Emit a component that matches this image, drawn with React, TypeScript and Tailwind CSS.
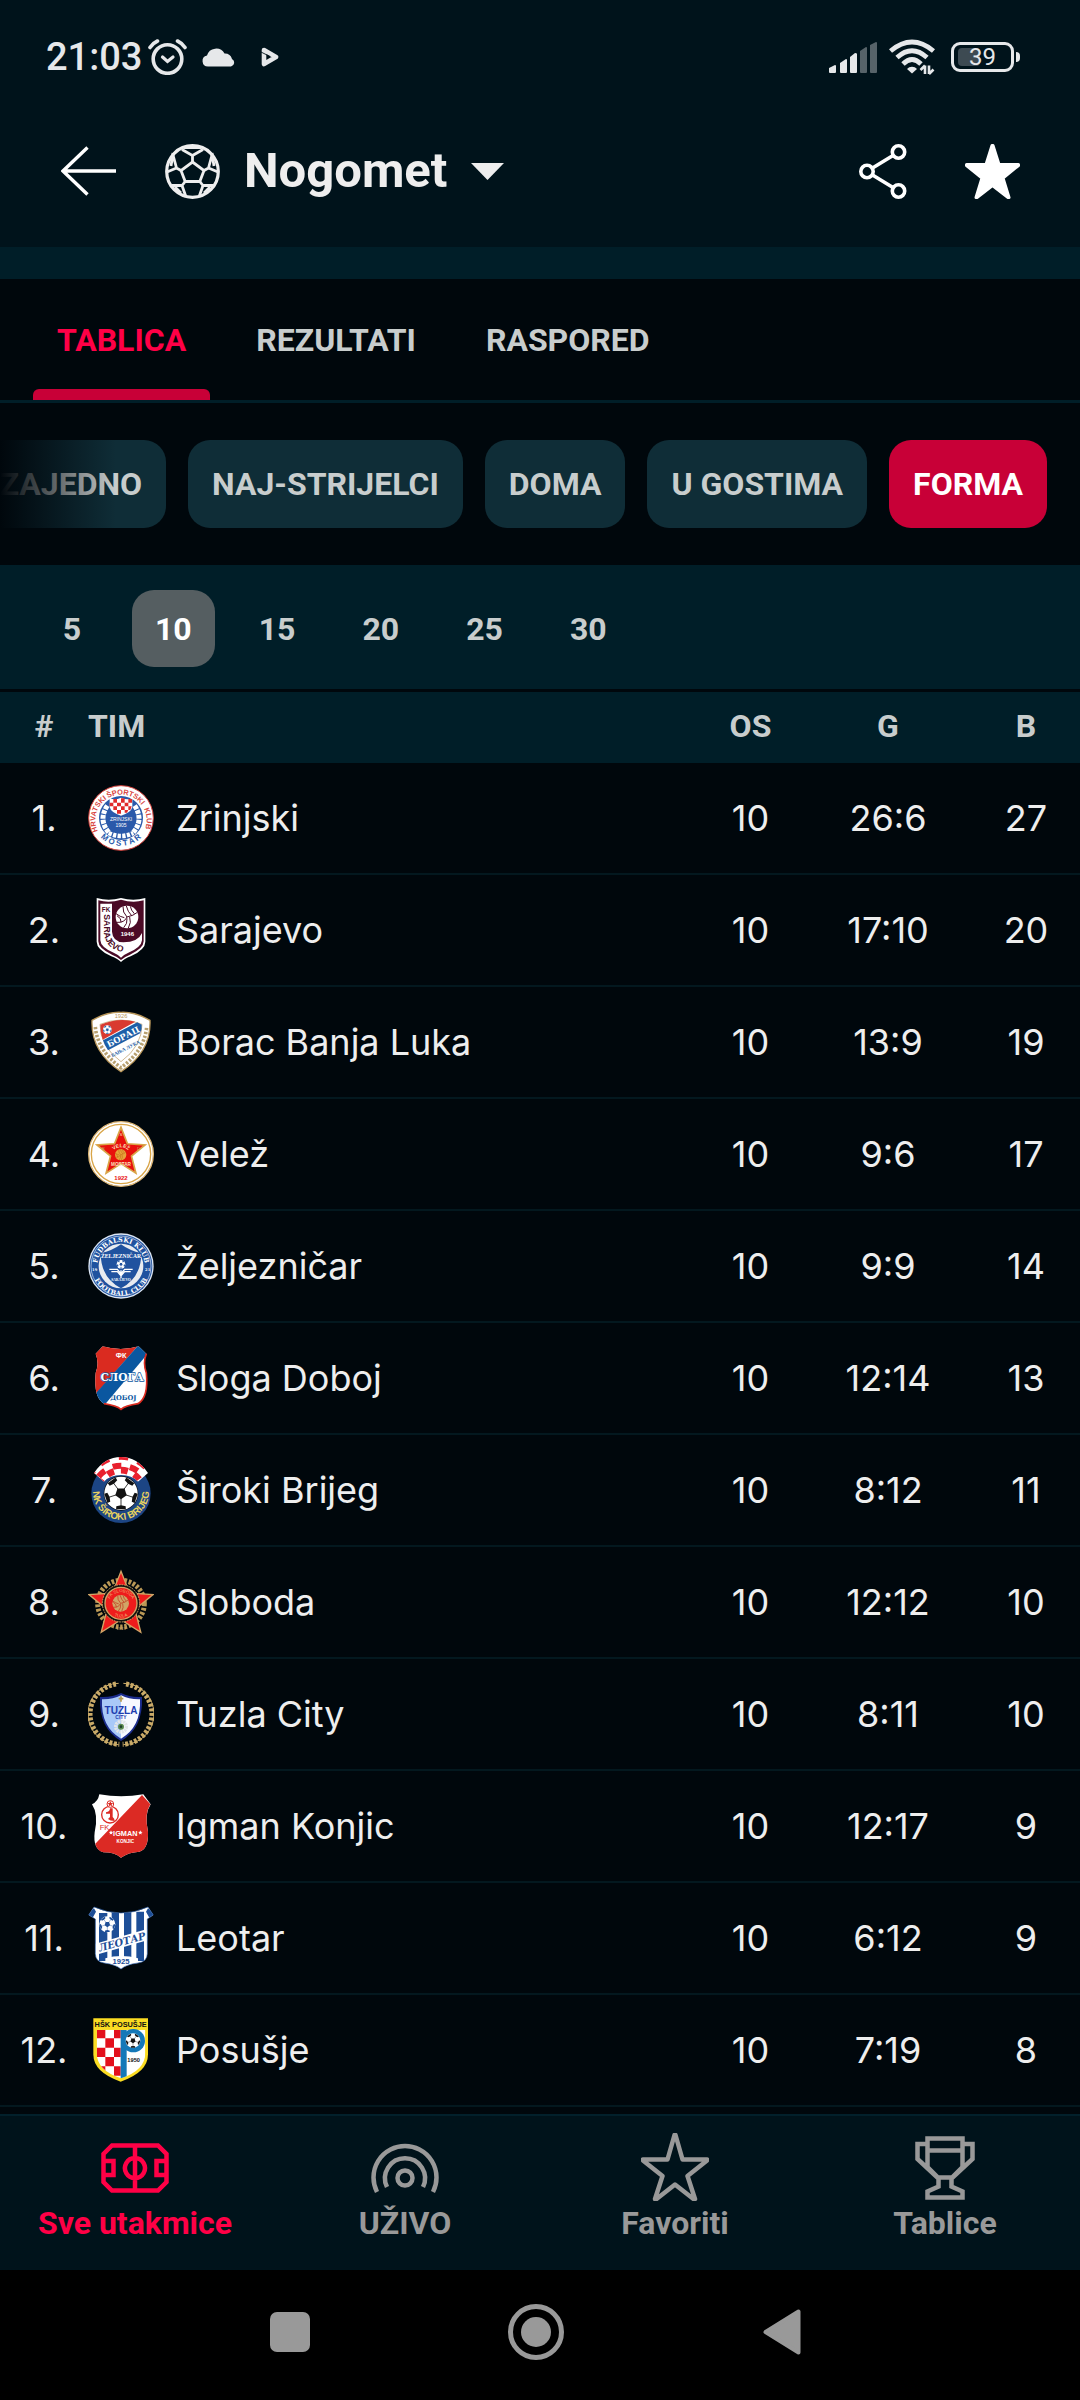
import { useState } from "react";
import type { ReactNode } from "react";

interface Team {
  name: string;
  played: number;
  goals: string;
  points: number;
  logo: ReactNode;
}

interface BallProps {
  cx: number;
  cy: number;
  r: number;
  base?: string;
  patch?: string;
}

const polar = (cx: number, cy: number, r: number, deg: number) => {
  const a = ((deg - 90) * Math.PI) / 180;
  return `${(cx + r * Math.cos(a)).toFixed(1)},${(cy + r * Math.sin(a)).toFixed(1)}`;
};

const starPoints = (cx: number, cy: number, outer: number, inner: number) =>
  Array.from({ length: 10 }, (_, i) => polar(cx, cy, i % 2 ? inner : outer, i * 36)).join(" ");

// Football with a centre pentagon and five patches cut by the edge
function Ball({ cx, cy, r, base = "#fff", patch = "#111" }: BallProps) {
  const sides = [0, 72, 144, 216, 288];
  return (
    <g>
      <circle cx={cx} cy={cy} r={r} fill={base} />
      <polygon points={sides.map((d) => polar(cx, cy, r * 0.36, d + 36)).join(" ")} fill={patch} />
      {sides.map((d) => (
        <g key={d}>
          <polygon
            points={[
              polar(cx, cy, r * 0.72, d + 36),
              polar(cx, cy, r * 0.82, d + 56),
              polar(cx, cy, r, d + 53),
              polar(cx, cy, r, d + 19),
              polar(cx, cy, r * 0.82, d + 16),
            ].join(" ")}
            fill={patch}
          />
          <polyline
            points={`${polar(cx, cy, r * 0.3, d + 36)} ${polar(cx, cy, r * 0.75, d + 36)}`}
            stroke={patch}
            strokeWidth={r * 0.05}
          />
        </g>
      ))}
    </g>
  );
}

function Volleyball({ cx, cy, r, base, line }: { cx: number; cy: number; r: number; base: string; line: string }) {
  return (
    <g transform={`translate(${cx} ${cy}) scale(${r / 34})`} fill="none" stroke={line} strokeWidth="3">
      <circle r="34" fill={base} stroke="none" />
      <path d="M0 0Q-14 -14 -12 -32M0 0Q20 -4 31 -14M0 0Q-8 18 -30 16M-30 -4Q-16 4 -18 16M4 33Q14 16 8 0M-2 -33Q2 -16 14 -4M10 -32Q12 -20 22 -10M-33 -10Q-20 0 -8 2M-10 32Q2 20 0 4" />
    </g>
  );
}

function Crest({ title, children }: { title: string; children: ReactNode }) {
  return (
    <svg viewBox="0 0 198 198" className="block size-[66px]" role="img" aria-label={title} fontFamily="Liberation Sans, sans-serif">
      {children}
    </svg>
  );
}

const zrinjski = (
  <Crest title="Zrinjski">
    <defs>
      <path id="zr-top" d="M30 140A77 77 0 1 1 168 140" />
      <path id="zr-bottom" d="M26 142A86 86 0 0 0 172 142" />
    </defs>
    <circle cx="99" cy="99" r="97" fill="#fff" stroke="#d9453f" strokeWidth="3" />
    <circle cx="99" cy="99" r="66" fill="#2a59aa" />
    <path d="M58 62Q30 104 62 142M140 62Q168 104 136 142" fill="none" stroke="#fff" strokeWidth="15" strokeDasharray="12 3" />
    <path d="M62 144Q99 162 136 144" fill="none" stroke="#fff" strokeWidth="14" strokeDasharray="10 4" />
    <path d="M65 40Q82 46 99 38Q116 46 133 40V66Q130 82 99 92Q68 82 65 66Z" fill="#fff" />
    <path d="M76 42h11v11h-11zM99 40h11v13h-11zM121 42h11v11h-11zM65 53h11v11h-11zM87 53h12v11h-12zM110 53h11v11h-11zM76 64h11v11h-11zM99 64h11v11h-11zM121 64h10l-4 11h-6zM87 75h12v11h-12zM110 75h11l-4 8h-7z" fill="#e02b2b" />
    <text x="99" y="108" textAnchor="middle" fontSize="15" fill="#fff">ZRINJSKI</text>
    <text x="99" y="125" textAnchor="middle" fontSize="15" fill="#fff">1905</text>
    <g fontSize="22" fontWeight="700" fill="#d9453f">
      <text>
        <textPath href="#zr-top" startOffset="18%" textAnchor="middle">HRVATSKI</textPath>
      </text>
      <text>
        <textPath href="#zr-top" startOffset="55%" textAnchor="middle">ŠPORTSKI</textPath>
      </text>
      <text>
        <textPath href="#zr-top" startOffset="87%" textAnchor="middle">KLUB</textPath>
      </text>
    </g>
    <text fontSize="24" fontWeight="700" fill="#2a59aa">
      <textPath href="#zr-bottom" startOffset="50%" textAnchor="middle">M O S T A R</textPath>
    </text>
  </Crest>
);

const sarajevo = (
  <Crest title="Sarajevo">
    <defs>
      <path id="sa-text" d="M48 52V108Q54 154 96 163Q116 160 142 136" />
    </defs>
    <path d="M26 3Q62 14 99 3Q136 14 172 3V134Q172 158 128 178Q108 186 99 195Q90 186 70 178Q26 158 26 134Z" fill="#fff" />
    <path d="M31 10Q64 19 99 8Q134 19 167 10V133Q167 154 126 173Q108 180 99 189Q90 180 72 173Q31 154 31 133Z" fill="#4b0a26" />
    <path d="M37 20H72V104Q74 134 106 136Q150 136 162 108V130Q160 150 124 166Q106 174 99 182Q92 174 74 166Q38 150 37 130Z" fill="#fff" />
    <Volleyball cx={117} cy={60} r={34} base="#fff" line="#4b0a26" />
    <text x="118" y="118" textAnchor="middle" fontSize="18" fontWeight="700" fill="#fff">1946</text>
    <text x="54" y="44" textAnchor="middle" fontSize="19" fontWeight="700" fill="#4b0a26">FK</text>
    <text fontSize="26" fontWeight="700" fill="#4b0a26">
      <textPath href="#sa-text">SARAJEVO</textPath>
    </text>
  </Crest>
);

const borac = (
  <Crest title="Borac Banja Luka">
    <path d="M12 34Q58 8 99 10Q140 8 186 34Q190 128 99 188Q8 128 12 34Z" fill="#fff" stroke="#b8965a" strokeWidth="4" />
    <path d="M22 54Q28 124 99 176Q170 124 176 54" fill="none" stroke="#b8a070" strokeWidth="11" strokeDasharray="7 5" />
    <path d="M36 46Q99 20 162 46Q162 112 99 158Q36 112 36 46Z" fill="#fff" stroke="#b8965a" strokeWidth="2" />
    <path d="M37 47Q92 24 142 38L44 92Q36 68 37 47Z" fill="#d93a30" />
    <path d="M45 94L148 40L161 47Q162 58 158 72L60 124Q50 110 45 94Z" fill="#1d5fa8" />
    <Ball cx={58} cy={62} r={13} patch="#1d5fa8" />
    <text x="106" y="92" textAnchor="middle" transform="rotate(-27 106 84)" fontFamily="DejaVu Serif, serif" fontWeight="700" fontSize="25" fill="#fff">БОРАЦ</text>
    <text x="112" y="124" textAnchor="middle" transform="rotate(-27 112 118)" fontFamily="Liberation Serif, serif" fontWeight="700" fontSize="15" fill="#1d5fa8">БАЊА ЛУКА</text>
    <text x="99" y="26" textAnchor="middle" fontSize="17" fill="#b8965a">1926</text>
  </Crest>
);

const velez = (
  <Crest title="Velež">
    <defs>
      <path id="ve-name" d="M72 92Q98 66 126 92" />
    </defs>
    <circle cx="99" cy="99" r="97" fill="#fff" stroke="#e0b978" strokeWidth="4" />
    <circle cx="99" cy="99" r="89" fill="none" stroke="#d9a548" strokeWidth="4" />
    <polygon points={starPoints(99, 95, 76, 33)} fill="#e8100c" stroke="#d9a548" strokeWidth="5" />
    <Volleyball cx={98} cy={101} r={17} base="#e8a33a" line="#b86514" />
    <text fontSize="15" fontWeight="700" fill="#fbe3c0">
      <textPath href="#ve-name" startOffset="50%" textAnchor="middle">VELEŽ</textPath>
    </text>
    <text x="99" y="135" textAnchor="middle" fontSize="14" fontWeight="700" fill="#fbe3c0">MOSTAR</text>
    <text x="99" y="177" textAnchor="middle" fontSize="18" fontWeight="700" fill="#e8100c">1922</text>
    <g fontSize="13" fill="#c9a068" textAnchor="middle">
      <text x="99" y="46" fill="#fbe3c0">S</text>
      <text x="46" y="87">R</text>
      <text x="152" y="87">D</text>
    </g>
  </Crest>
);

const zeljeznicar = (
  <Crest title="Željezničar">
    <defs>
      <path id="ze-top" d="M28 98A71 71 0 0 1 170 98" />
      <path id="ze-bottom" d="M12 118A89 89 0 0 0 186 118" />
    </defs>
    <circle cx="99" cy="99" r="98" fill="#dce6f4" />
    <circle cx="99" cy="99" r="94" fill="#20529f" />
    <circle cx="99" cy="99" r="90" fill="none" stroke="#dce6f4" strokeWidth="2" />
    <circle cx="99" cy="99" r="67" fill="#e8ebf0" />
    <path d="M38 60Q72 54 99 34Q126 54 160 60Q160 134 99 166Q38 134 38 60Z" fill="#20529f" />
    <text x="99" y="76" textAnchor="middle" fontFamily="Liberation Serif, serif" fontWeight="700" fontSize="17" fill="#fff">ŽELJEZNIČAR</text>
    <Ball cx={99} cy={94} r={13} patch="#20529f" />
    <path d="M64 109H88L99 122L110 109H134M70 116H88L99 128L110 116H128M99 112V136" fill="none" stroke="#fff" strokeWidth="4" />
    <text x="99" y="144" textAnchor="middle" fontFamily="Liberation Serif, serif" fontWeight="700" fontSize="11" fill="#fff">SARAJEVO</text>
    <g fontFamily="DejaVu Serif, serif" fontWeight="700" fill="#fff">
      <text fontSize="20">
        <textPath href="#ze-top" startOffset="50%" textAnchor="middle">FUDBALSKI KLUB</textPath>
      </text>
      <text fontSize="20">
        <textPath href="#ze-bottom" startOffset="50%" textAnchor="middle">FOOTBALL CLUB</textPath>
      </text>
      <text x="20" y="113" textAnchor="middle" fontSize="11">19</text>
      <text x="179" y="113" textAnchor="middle" fontSize="11">21</text>
    </g>
  </Crest>
);

const sloga = (
  <Crest title="Sloga Doboj">
    <clipPath id="sl-clip">
      <path d="M44 4Q99 20 152 4L175 26Q164 54 175 84Q182 158 150 176Q112 182 99 193Q86 182 48 176Q16 158 23 84Q34 54 23 26Z" />
    </clipPath>
    <g clipPath="url(#sl-clip)">
      <rect width="198" height="198" fill="#fff" />
      <path d="M0 0H152L0 174Z" fill="#da2b20" />
      <path d="M152 0L186 18L36 196L10 160Z" fill="#0a57a0" />
    </g>
    <path d="M175 26Q164 54 175 84Q182 158 150 176Q112 182 99 193Q86 182 48 176" fill="none" stroke="#da2b20" strokeWidth="5" />
    <text x="99" y="39" textAnchor="middle" fontSize="22" fontWeight="700" fill="#fff">ФК</text>
    <g fontFamily="DejaVu Serif, serif" fontWeight="700">
      <text x="102" y="108" textAnchor="middle" fontSize="32" fill="#fff" stroke="#0a57a0" strokeWidth="4" paintOrder="stroke">СЛОГА</text>
      <text x="106" y="165" textAnchor="middle" fontSize="20" fill="#0a57a0">ДОБОЈ</text>
    </g>
  </Crest>
);

const siroki = (
  <Crest title="Široki Brijeg">
    <defs>
      <path id="si-text" d="M20 76A84 84 0 1 0 178 76" />
      <clipPath id="si-clip">
        <path d="M18 48Q50 0 99 0Q148 0 180 48L150 74Q132 54 99 54Q66 54 48 74Z" />
      </clipPath>
    </defs>
    <circle cx="99" cy="109" r="89" fill="#1c4584" />
    <circle cx="99" cy="109" r="52" fill="#0b0f16" />
    <g clipPath="url(#si-clip)">
      <rect width="198" height="90" fill="#fff" />
      <g fill="none" stroke="#e8202e">
        <path d="M5 58A104 104 0 0 1 193 58" strokeWidth="20" strokeDasharray="30 30" strokeDashoffset="10" />
        <path d="M22 74A86 86 0 0 1 176 74" strokeWidth="18" strokeDasharray="26 26" strokeDashoffset="34" />
        <path d="M36 82A68 68 0 0 1 162 82" strokeWidth="20" strokeDasharray="21 21" strokeDashoffset="4" />
      </g>
    </g>
    <Ball cx={99} cy={109} r={50} />
    <text fontSize="29" fontWeight="700" fill="#ead35e">
      <textPath href="#si-text" startOffset="50%" textAnchor="middle">NK ŠIROKI BRIJEG</textPath>
    </text>
  </Crest>
);

const sloboda = (
  <Crest title="Sloboda">
    <defs>
      <path id="so-top" d="M62 116A38 38 0 1 1 136 116" />
      <path id="so-bottom" d="M60 124A46 46 0 0 0 138 124" />
    </defs>
    <circle cx="99" cy="104" r="70" fill="none" stroke="#b99856" strokeWidth="15" strokeDasharray="8 5" />
    <polygon points={starPoints(99, 108, 101, 44)} fill="#ee1c1c" stroke="#d0a566" strokeWidth="4" />
    <circle cx="99" cy="103" r="56" fill="#15130f" stroke="#d0a566" strokeWidth="3" strokeDasharray="5 3" />
    <circle cx="99" cy="103" r="48" fill="#ee1c1c" stroke="#d0a566" strokeWidth="4" />
    <Volleyball cx={98} cy={103} r={25} base="#d0a566" line="#c03a20" />
    <text fontSize="13" fill="#f0b070">
      <textPath href="#so-top" startOffset="50%" textAnchor="middle">FK SLOBODA</textPath>
    </text>
    <text fontSize="13" fill="#f0b070">
      <textPath href="#so-bottom" startOffset="50%" textAnchor="middle">TUZLA</textPath>
    </text>
    <text x="99" y="184" textAnchor="middle" fontSize="13" fill="#d0a566">1919</text>
  </Crest>
);

const tuzla = (
  <Crest title="Tuzla City">
    <g fill="none" stroke="#c9aa68">
      <path d="M92 7A92 92 0 0 0 92 191M106 7A92 92 0 0 1 106 191" strokeWidth="3" />
      <path d="M84 9A91 91 0 0 0 94 190M114 9A91 91 0 0 1 104 190" strokeWidth="15" strokeDasharray="9 5" />
    </g>
    <path d="M36 48Q72 50 99 36Q126 50 162 48Q166 142 99 180Q32 142 36 48Z" fill="#1b2c8c" />
    <path d="M42 55Q74 56 99 43V173Q38 138 42 55Z" fill="#a9c9f8" />
    <path d="M156 55Q124 56 99 43V173Q160 138 156 55Z" fill="#f7f9ff" />
    <path d="M99 46v16M92 53h14" stroke="#b59b4e" strokeWidth="5" />
    <text x="99" y="99" textAnchor="middle" fontSize="30" fontWeight="700" fill="#1d3db0">TUZLA</text>
    <text x="99" y="115" textAnchor="middle" fontSize="15" fontWeight="700" fill="#1d3db0">CITY</text>
    <circle cx="99" cy="137" r="16" fill="none" stroke="#e2e5e8" strokeWidth="10" strokeDasharray="6 2" />
    <circle cx="99" cy="137" r="9" fill="#5c8a50" />
    <circle cx="99" cy="137" r="4" fill="#20402c" />
  </Crest>
);

const igman = (
  <Crest title="Igman Konjic">
    <path d="M34 4Q99 16 166 4L188 34Q168 64 180 116Q182 168 154 176Q120 178 99 194Q80 178 46 178Q14 168 20 118Q32 64 12 34Q30 26 34 4Z" fill="#fff" />
    <path d="M162 6L187 34Q168 64 180 116Q182 168 154 176Q120 178 99 194Q80 178 46 178Q26 172 22 152Z" fill="#dc2a24" />
    <circle cx="66" cy="65" r="25" fill="none" stroke="#dc2a24" strokeWidth="4" />
    <circle cx="67" cy="33" r="10" fill="#fff" stroke="#dc2a24" strokeWidth="3" />
    <polygon points={starPoints(67, 33, 9, 4)} fill="#dc2a24" />
    <path d="M54 58Q66 56 66 46H74V72Q80 76 80 84Q66 84 60 78L66 72V62H54Z" fill="#dc2a24" />
    <text x="35" y="110" fontSize="23" fill="#dc2a24">FK</text>
    <text x="112" y="130" textAnchor="middle" fontSize="22" fontWeight="700" fill="#fff">IGMAN</text>
    <text x="112" y="149" textAnchor="middle" fontSize="14" fontWeight="700" fill="#fff">KONJIC</text>
    <polygon points={starPoints(69, 119, 7, 3)} fill="#fff" />
    <polygon points={starPoints(157, 119, 7, 3)} fill="#fff" />
  </Crest>
);

const leotar = (
  <Crest title="Leotar">
    <clipPath id="le-clip">
      <path d="M18 6Q99 42 180 6L196 30L178 42V146Q178 170 150 174Q116 178 99 192Q82 178 48 174Q22 170 22 146V42L2 30Z" />
    </clipPath>
    <g clipPath="url(#le-clip)">
      <rect width="198" height="198" fill="#fff" />
      <path d="M0 28L18 10L24 20L14 38ZM198 28L180 10L174 20L184 38ZM33 24H58V168H33ZM71 20H93V180H71ZM108 20H130V180H108ZM145 20H168V168H145Z" fill="#1d4e97" />
      <path d="M22 116L178 72V106L22 150Z" fill="#fff" />
      <path d="M52 160Q99 146 150 160V198H52Z" fill="#fff" />
    </g>
    <path d="M18 6Q99 42 180 6L196 30L178 42V146Q178 170 150 174Q116 178 99 192Q82 178 48 174Q22 170 22 146V42L2 30Z" fill="none" stroke="#2c5ea6" strokeWidth="2" />
    <Ball cx={58} cy={58} r={24} patch="#1d4e97" />
    <text x="102" y="121" textAnchor="middle" transform="rotate(-15 102 110)" fontFamily="DejaVu Serif, serif" fontWeight="700" fontStyle="italic" fontSize="30" fill="#1d4e97">ЛЕОТАР</text>
    <text x="99" y="177" textAnchor="middle" fontSize="23" fontWeight="700" fill="#1d4e97">1925</text>
  </Crest>
);

const posusje = (
  <Crest title="Posušje">
    <clipPath id="po-clip">
      <path d="M26 38H172V108Q172 160 99 184Q26 160 26 108Z" />
    </clipPath>
    <path d="M16 4H180V112Q180 166 98 194Q16 166 16 112Z" fill="#fbdc22" />
    <g clipPath="url(#po-clip)">
      <rect width="198" height="198" fill="#fff" />
      <path d="M26 38h26v26h-26zM78 38h20v26h-20zM52 64h26v28h-26zM26 92h26v28h-26zM78 92h20v28h-20zM52 120h26v28h-26zM26 148h26v28h-26zM78 148h20v28h-20z" fill="#e3101c" />
      <path d="M98 38H116V198H98Z" fill="#1478b8" />
    </g>
    <circle cx="136" cy="71" r="35" fill="#1478b8" />
    <Ball cx={135} cy={71} r={22} />
    <text x="98" y="29" textAnchor="middle" fontSize="22" fontWeight="700" fill="#111">HŠK POSUŠJE</text>
    <text x="137" y="134" textAnchor="middle" fontSize="17" fontWeight="700" fill="#111">1950</text>
  </Crest>
);

const teams: Team[] = [
  { name: "Zrinjski", played: 10, goals: "26:6", points: 27, logo: zrinjski },
  { name: "Sarajevo", played: 10, goals: "17:10", points: 20, logo: sarajevo },
  { name: "Borac Banja Luka", played: 10, goals: "13:9", points: 19, logo: borac },
  { name: "Velež", played: 10, goals: "9:6", points: 17, logo: velez },
  { name: "Željezničar", played: 10, goals: "9:9", points: 14, logo: zeljeznicar },
  { name: "Sloga Doboj", played: 10, goals: "12:14", points: 13, logo: sloga },
  { name: "Široki Brijeg", played: 10, goals: "8:12", points: 11, logo: siroki },
  { name: "Sloboda", played: 10, goals: "12:12", points: 10, logo: sloboda },
  { name: "Tuzla City", played: 10, goals: "8:11", points: 10, logo: tuzla },
  { name: "Igman Konjic", played: 10, goals: "12:17", points: 9, logo: igman },
  { name: "Leotar", played: 10, goals: "6:12", points: 9, logo: leotar },
  { name: "Posušje", played: 10, goals: "7:19", points: 8, logo: posusje },
];

const tabs = ["TABLICA", "REZULTATI", "RASPORED"];
const filters = ["ZAJEDNO", "NAJ-STRIJELCI", "DOMA", "U GOSTIMA", "FORMA"];
const matchCounts = [5, 10, 15, 20, 25, 30];

function StatusBar() {
  return (
    <div className="flex h-[114px] items-center justify-between pl-[46px] pr-[60px] text-[#e6e8ea]">
      <div className="flex items-center">
        <span className="mr-1.5 text-[38px] leading-[44px] font-medium">21:03</span>
        <svg viewBox="0 0 39 36" className="h-9 w-[39px]" fill="none" stroke="currentColor" strokeLinecap="round">
          <circle cx="19.5" cy="20" r="14.3" strokeWidth="3.6" />
          <path d="M14.5 18L19.5 22.5L25 18" strokeWidth="3.2" />
          <path d="M2 8.5Q5 4 9.5 2M37 8.5Q34 4 29.500 2" strokeWidth="3.6" />
        </svg>
        <svg viewBox="0 0 34 20" className="ml-[15px] h-5 w-[34px]" fill="currentColor">
          <path d="M6 19.5A5.5 5.5 0 0 1 5 8.6A9.5 9.5 0 0 1 22.5 6.5A7.5 7.5 0 0 1 30 12A4 4 0 0 1 29 19.5Z" />
        </svg>
        <svg viewBox="0 0 18 20" className="ml-[25px] h-5 w-[18px]" fill="none" stroke="currentColor" strokeLinejoin="round">
          <path d="M3 3L15 10L3 17Z" strokeWidth="4.6" />
          <path d="M0 5L9 9.500" stroke="#00131b" strokeWidth="0.9" />
        </svg>
      </div>
      <div className="flex items-center">
        <svg viewBox="0 0 48 31" className="h-[31px] w-12" fill="currentColor">
          <path d="M0 26L6 23Q7 23 7 24V30Q7 31 6 31H1Q0 31 0 30ZM11 21L17 17Q18 17 18 18V30Q18 31 17 31H12Q11 31 11 30ZM21 15L26 11Q28 11 28 12V30Q28 31 27 31H22Q21 31 21 30Z" />
          <path d="M31 9L37 5Q38 5 38 6V30Q38 31 37 31H32Q31 31 31 30ZM41 3L47 0Q48 0 48 1V30Q48 31 47 31H42Q41 31 41 30Z" opacity=".38" />
        </svg>
        <svg viewBox="0 0 46 36" className="ml-3 h-9 w-[46px]" fill="none" stroke="currentColor" strokeWidth="4.8">
          <path d="M1.5 12Q23 -6 44.5 12" />
          <path d="M8 18.5Q23 5 38 18.5" />
          <path d="M14 25Q23 16 32 25" />
          <path d="M18 30A6.5 6.5 0 0 1 28 30L23 34.5Z" fill="currentColor" stroke="none" />
          <path d="M36 26.500V35M31.500 31L36 26.500M40 35V26.500M44.500 30.500L40 35" strokeWidth="2.6" />
        </svg>
        <div className="ml-4 flex items-center">
          <div className="relative flex h-[30px] w-[63px] items-center justify-center rounded-[9px] border-3 border-[#e6e8ea]">
            <span className="absolute inset-y-[3px] left-1 w-[22px] rounded-[4px] bg-[#3d4a52]" />
            <span className="relative text-2xl leading-6">39</span>
          </div>
          <span className="ml-0.5 h-[10px] w-1 rounded-r-sm bg-[#e6e8ea]" />
        </div>
      </div>
    </div>
  );
}

function Header() {
  return (
    <header className="bg-[#00131b] pb-[19px]">
      <StatusBar />
      <div className="flex h-[114px] items-center pr-[60px] pl-[61px] text-[#eee]">
        <button aria-label="Natrag" className="mr-[49px]">
          <svg viewBox="0 0 55 50" className="h-[50px] w-[55px]" fill="none" stroke="#fff" strokeWidth="3.4">
            <path d="M26.5 1.5L2 25L26.5 48.5M2 25H55" />
          </svg>
        </button>
        <button className="flex items-center">
          <svg viewBox="0 0 55 55" className="size-[55px]" fill="none" stroke="currentColor" strokeWidth="2.8">
            <circle cx="27.5" cy="27.5" r="25.8" strokeWidth="3.2" />
            <path d="M27.5 18L39 26.5L34.8 37.5H20.2L16 26.5Z" />
            <path d="M27.5 18V11.5L17 5.5M27.5 11.5L38 5.5M19 3.5H36M39 26.5L43.5 24L53 28M43.5 24L47 11M16 26.5L11.5 24L2 28M11.5 24L8 11M34.8 37.5L38 41.5H48M38 41.5L34 53M20.2 37.5L17 41.5H7M17 41.5L21 53M47 9L49 22M8 9L6 22M45 43L39 49M10 43L16 49" />
          </svg>
          <span className="ml-6 text-[49px] leading-[56px] font-bold">Nogomet</span>
          <svg viewBox="0 0 33 17" className="ml-6 h-[17px] w-[33px]" fill="currentColor">
            <path d="M0 0H33L16.5 17Z" />
          </svg>
        </button>
        <button aria-label="Podijeli" className="ml-auto">
          <svg viewBox="0 0 48 55" className="h-[55px] w-12" fill="none" stroke="#fff" strokeWidth="3.6">
            <circle cx="8" cy="27.5" r="6.2" />
            <circle cx="39.5" cy="8" r="6.2" />
            <circle cx="39.5" cy="47" r="6.2" />
            <path d="M13.5 24L34 11.5M13.5 31L34 43.5" />
          </svg>
        </button>
        <button aria-label="Dodaj u favorite" className="ml-[58px]">
          <svg viewBox="0 0 55 55" className="size-[55px]" fill="#fff" stroke="#fff" strokeWidth="3" strokeLinejoin="round">
            <path d="M27 1.5H28L34 20.5H53.5V21.5L38 34L44 53.5H43L27.5 41.5L12 53.5H11L17 34L1.5 21.5V20.5H21Z" />
          </svg>
        </button>
      </div>
    </header>
  );
}

function BottomNav() {
  const [active, setActive] = useState("Sve utakmice");
  const items = [
    {
      label: "Sve utakmice",
      icon: <path d="M11 12.5H57L65.5 21V49L57 57.5H11L2.5 49V21ZM34 12V58M2 28H12.5V42H2M66 28H55.5V42H66M34 25A10 10 0 1 1 33.9 25Z" />,
    },
    {
      label: "UŽIVO",
      icon: (
        <>
          <circle cx="34" cy="45" r="7.5" />
          <path d="M16 54A20 20 0 1 1 52 54M6 59A31.5 31.5 0 1 1 62 59" />
        </>
      ),
    },
    {
      label: "Favoriti",
      icon: <path d="M33.5 2H34.5L41.5 26.5H66V27.5L46.5 43L54 66H52.5L34 51.5L15.5 66H14L21.5 43L2 27.5V26.5H26.5Z" strokeLinejoin="round" />,
    },
    {
      label: "Tablice",
      icon: (
        <path d="M16.5 5.5H51.5V34L41 44.5H27L16.5 34ZM16.5 17.5H51.5M16.5 11H6.5V26L27 45M51.5 11H61.5V26L41 45M27.5 44V53.5L16.5 58.5V64.5H51.5V58.5L40.5 53.5V44" />
      ),
    },
  ];

  return (
    <nav className="grid h-[156px] grid-cols-4 border-t-2 border-[#02202b] bg-[#00131b]">
      {items.map((item) => (
        <button
          key={item.label}
          onClick={() => setActive(item.label)}
          className={`flex flex-col items-center gap-1 pt-[17px] text-[32px] leading-9 font-bold ${
            active === item.label ? "text-[#ff0046]" : "text-[#999]"
          }`}
        >
          <svg viewBox="0 0 68 68" className="size-[68px]" fill="none" stroke="currentColor" strokeWidth="4.5">
            {item.icon}
          </svg>
          {item.label}
        </button>
      ))}
    </nav>
  );
}

function SystemNav() {
  return (
    <div className="flex h-[130px] items-center justify-center gap-[190px] bg-black pr-2 pb-1.5 text-[#999]">
      <button aria-label="Nedavno" className="flex size-14 items-center justify-center">
        <span className="size-10 rounded-[7px] bg-[#999]" />
      </button>
      <button aria-label="Početna" className="flex size-14 items-center justify-center rounded-full border-5 border-[#999]">
        <span className="size-[30px] rounded-full bg-[#999]" />
      </button>
      <button aria-label="Nazad" className="flex size-14 items-center justify-center">
        <svg viewBox="0 0 38 46" className="h-[46px] w-[38px]" fill="currentColor" stroke="currentColor" strokeWidth="4" strokeLinejoin="round">
          <path d="M2.5 23L35.5 2.5V43.5Z" />
        </svg>
      </button>
    </div>
  );
}

export default function App() {
  const [tab, setTab] = useState("TABLICA");
  const [filter, setFilter] = useState("FORMA");
  const [count, setCount] = useState(10);

  return (
    <div className="flex min-h-screen flex-col overflow-hidden bg-[#00070c] font-[Roboto,sans-serif] text-[#c8cdcd]">
      <Header />
      <div className="h-8 bg-[#001e28]" />

      <div className="flex h-[124px] gap-[22px] border-b-3 border-[#001e28] pl-[33px]">
        {tabs.map((t) => (
          <button
            key={t}
            onClick={() => setTab(t)}
            className={`relative px-6 text-[32px] leading-9 font-bold ${tab === t ? "text-[#ff0046]" : ""}`}
          >
            {t}
            {tab === t && <span className="absolute inset-x-0 bottom-0 h-[11px] rounded-t-md bg-[#c80037]" />}
          </button>
        ))}
      </div>

      <div className="relative flex justify-end gap-[22px] overflow-hidden py-[37px] pr-[33px]">
        {filters.map((f) => (
          <button
            key={f}
            onClick={() => setFilter(f)}
            className={`h-[88px] shrink-0 rounded-[22px] px-6 text-[32px] leading-9 font-bold ${
              filter === f ? "bg-[#c80037] text-white" : "bg-[#0f2d37]"
            }`}
          >
            {f}
          </button>
        ))}
        <span className="pointer-events-none absolute inset-y-0 left-0 w-[116px] bg-linear-to-r from-[#00070c] to-transparent" />
      </div>

      <div className="flex gap-[21px] bg-[#001e28] pt-[25px] pb-[22px] pl-[33px]">
        {matchCounts.map((n) => (
          <button
            key={n}
            onClick={() => setCount(n)}
            className={`h-[77px] min-w-[78px] rounded-[22px] px-[23px] text-[32px] leading-9 font-bold ${
              count === n ? "bg-[#555e61] text-white" : ""
            }`}
          >
            {n}
          </button>
        ))}
      </div>

      <table className="mt-[3px] w-full table-fixed border-separate border-spacing-0">
        <thead>
          <tr className="h-[71px] bg-[#001e28] text-[32px] leading-9">
            <th className="w-[88px] p-0 pb-1 font-bold">#</th>
            <th className="p-0 pb-1 text-left font-bold">TIM</th>
            <th className="w-[107px] p-0 pb-1 font-bold">OS</th>
            <th className="w-[168px] p-0 pb-1 font-bold">G</th>
            <th className="w-[108px] p-0 pb-1 font-bold">B</th>
          </tr>
        </thead>
        <tbody className="font-[Inter,sans-serif] text-4xl leading-[44px] text-[#eee]">
          {teams.map((team, i) => (
            <tr key={team.name} className="h-28 text-center">
              <td className="border-b-2 border-[#03181f] p-0">{i + 1}.</td>
              <td className="border-b-2 border-[#03181f] p-0">
                <div className="flex items-center gap-[22px]">
                  {team.logo}
                  <span>{team.name}</span>
                </div>
              </td>
              <td className="border-b-2 border-[#03181f] p-0">{team.played}</td>
              <td className="border-b-2 border-[#03181f] p-0">{team.goals}</td>
              <td className="border-b-2 border-[#03181f] p-0">{team.points}</td>
            </tr>
          ))}
        </tbody>
      </table>

      <div className="mt-auto pt-[7px]">
        <BottomNav />
        <SystemNav />
      </div>
    </div>
  );
}
